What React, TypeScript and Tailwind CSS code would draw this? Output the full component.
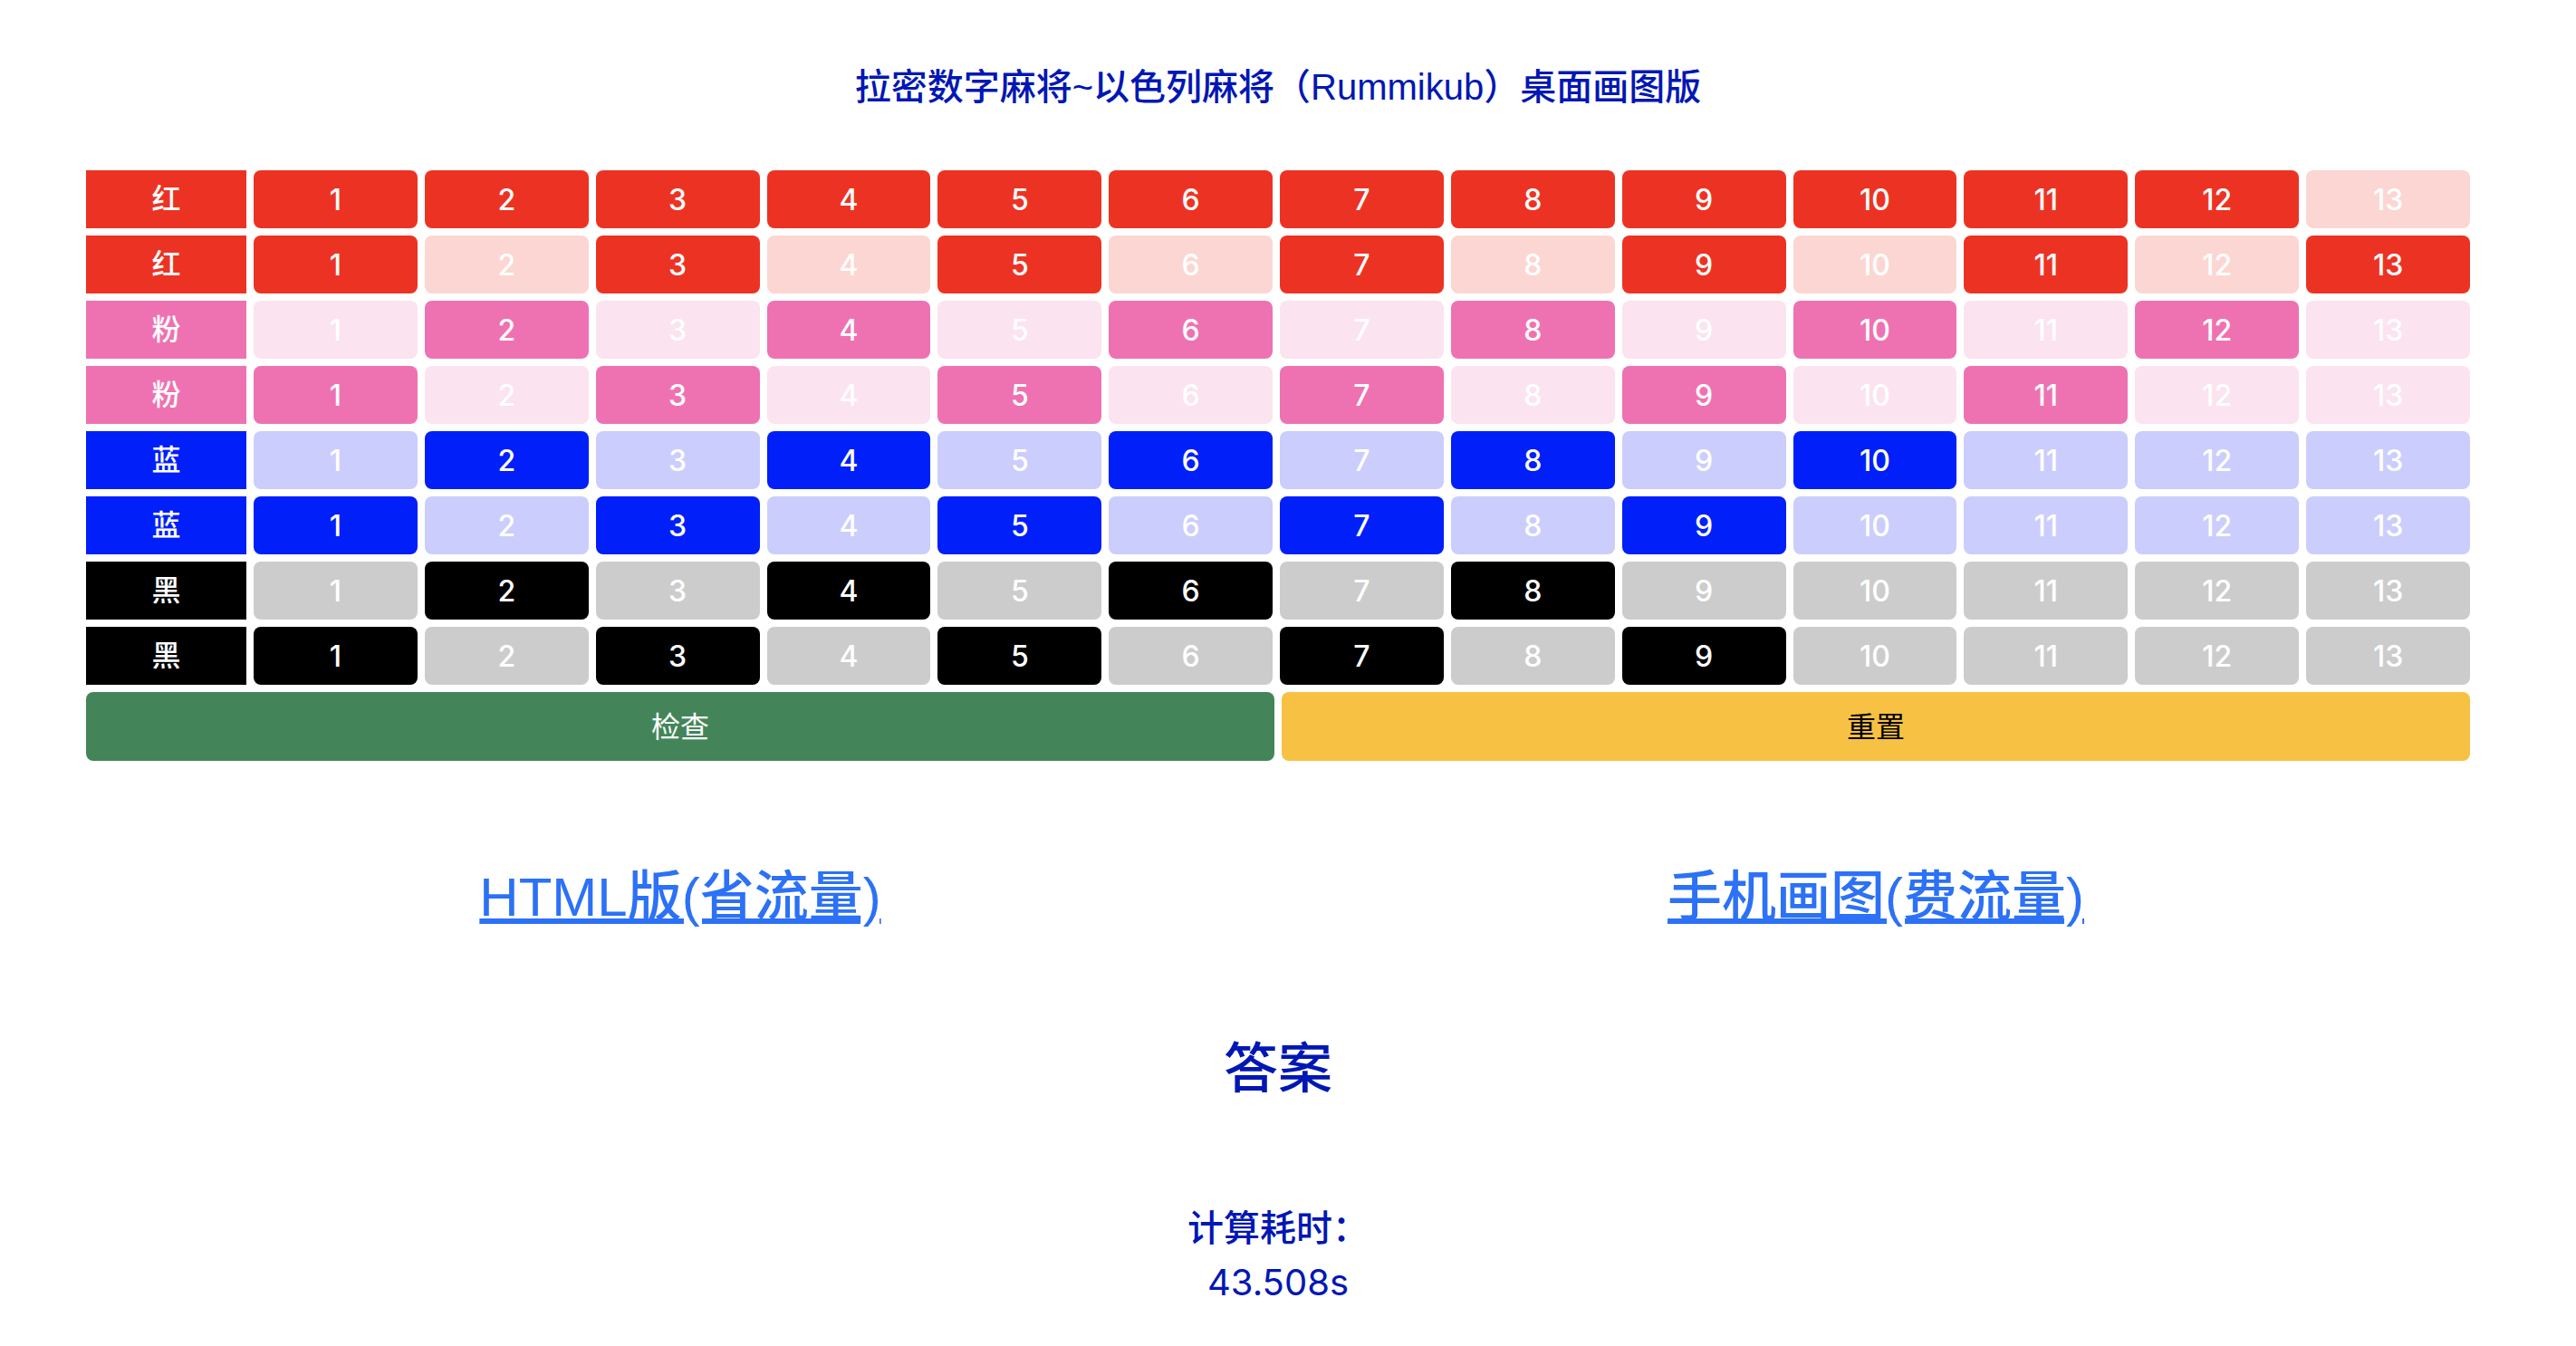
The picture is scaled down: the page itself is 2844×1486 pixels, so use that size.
import { useState } from "react";

type Group = {
  label: string;
  name: string;
  on: string;
  off: string;
  active: number[];
};

const red = { label: "红", on: "bg-[#ec3323]", off: "bg-[#fcd6d2]" };
const pink = { label: "粉", on: "bg-[#ee72b1]", off: "bg-[#fbe3ef]" };
const blue = { label: "蓝", on: "bg-[#001ff9]", off: "bg-[#cbcdfd]" };
const black = { label: "黑", on: "bg-black", off: "bg-[#cccccc]" };

const initialRows: Group[] = [
  { ...red, name: "红 1", active: [1, 2, 3, 4, 5, 6, 7, 8, 9, 10, 11, 12] },
  { ...red, name: "红 2", active: [1, 3, 5, 7, 9, 11, 13] },
  { ...pink, name: "粉 1", active: [2, 4, 6, 8, 10, 12] },
  { ...pink, name: "粉 2", active: [1, 3, 5, 7, 9, 11] },
  { ...blue, name: "蓝 1", active: [2, 4, 6, 8, 10] },
  { ...blue, name: "蓝 2", active: [1, 3, 5, 7, 9] },
  { ...black, name: "黑 1", active: [2, 4, 6, 8] },
  { ...black, name: "黑 2", active: [1, 3, 5, 7, 9] },
];

const numbers = Array.from({ length: 13 }, (_, i) => i + 1);

function TileRow({ row, onToggle }: { row: Group; onToggle: (n: number) => void }) {
  return (
    <div role="group" aria-label={row.name} className="flex gap-2 font-medium text-white">
      <div className={`flex h-16 w-[177px] shrink-0 items-center justify-center ${row.on}`}>
        {row.label}
      </div>
      {numbers.map((n) => {
        const active = row.active.includes(n);
        return (
          <button
            key={n}
            type="button"
            aria-pressed={active}
            onClick={() => onToggle(n)}
            className={`h-16 min-w-0 flex-1 rounded-lg pt-0.5 ${active ? row.on : row.off}`}
          >
            {n}
          </button>
        );
      })}
    </div>
  );
}

export default function App() {
  const [rows, setRows] = useState(initialRows);

  const toggle = (index: number, n: number) =>
    setRows((current) =>
      current.map((row, i) =>
        i === index
          ? {
              ...row,
              active: row.active.includes(n)
                ? row.active.filter((value) => value !== n)
                : [...row.active, n],
            }
          : row,
      ),
    );

  return (
    <main className="min-h-screen bg-white pt-[66px] pr-[117px] pb-8 pl-[95px] text-center font-['Inter','Noto_Sans_CJK_SC',sans-serif] text-[32px] leading-[48px] text-[#0017b4]">
      <h1 className="font-['Liberation_Sans','Noto_Sans_CJK_SC',sans-serif] text-[40px] leading-[60px] font-medium">
        拉密数字麻将~以色列麻将（Rummikub）桌面画图版
      </h1>

      <section className="mt-[62px] flex flex-col gap-2">
        {rows.map((row, i) => (
          <TileRow key={row.name} row={row} onToggle={(n) => toggle(i, n)} />
        ))}
        <div className="grid grid-cols-2 gap-2">
          <button type="button" className="h-[76px] rounded-lg bg-[#438558] pt-0.5 text-white">
            检查
          </button>
          <button
            type="button"
            onClick={() => setRows(initialRows)}
            className="h-[76px] rounded-lg bg-[#f7c144] pt-0.5 text-black"
          >
            重置
          </button>
        </div>
      </section>

      <nav className="mt-[106px] grid grid-cols-2 gap-2 font-['Liberation_Sans','Noto_Sans_CJK_SC',sans-serif] text-[60px] leading-[90px] font-medium text-[#2c71f6]">
        <div>
          <a href="#html" className="underline decoration-[6px] underline-offset-[3px]">
            HTML版(省流量)
          </a>
        </div>
        <div>
          <a href="#mobile" className="underline decoration-[6px] underline-offset-[3px]">
            手机画图(费流量)
          </a>
        </div>
      </nav>

      <h2 className="mt-[98px] text-[60px] leading-[90px] font-medium">答案</h2>

      <div className="mt-[102px] text-[40px] leading-[60px]">
        <p className="font-medium">计算耗时：</p>
        <p>43.508s</p>
      </div>
    </main>
  );
}
